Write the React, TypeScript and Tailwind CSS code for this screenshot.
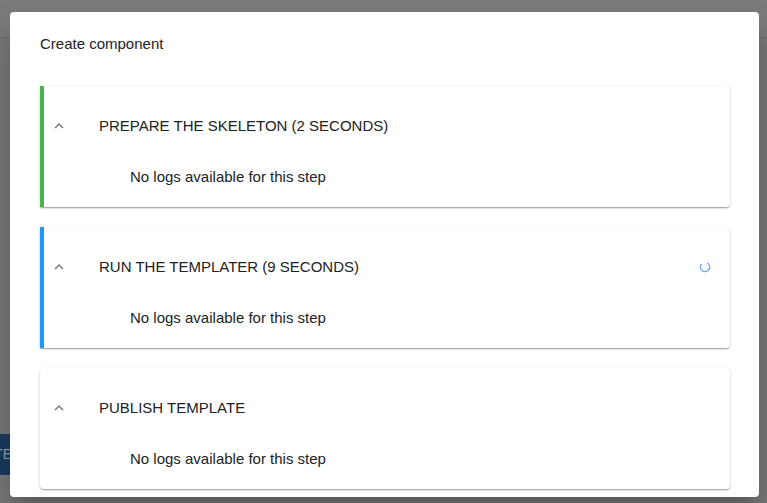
import React from "react";

const Chevron = () => (
  <svg width="18" height="18" viewBox="0 0 24 24" fill="#757575">
    <path d="M7.41 15.41L12 10.83l4.59 4.58L18 14l-6-6-6 6z" />
  </svg>
);

const Spinner = () => (
  <svg width="12" height="12" viewBox="0 0 12 12">
    <circle cx="6" cy="6" r="4.6" fill="none" stroke="#64a6ec" strokeWidth="1.4" strokeDasharray="22 7" transform="rotate(-60 6 6)" />
  </svg>
);

const Step = ({ title, border, loading }: { title: string; border: string; loading?: boolean }) => (
  <div
    className={`bg-white rounded-[4px] border-l-4 ${border} shadow-[0_1px_3px_rgba(0,0,0,0.2),0_1px_1px_rgba(0,0,0,0.14),0_2px_1px_-1px_rgba(0,0,0,0.12)]`}
  >
    <div className="flex items-center h-[80px] pl-[6px] pr-[19px]">
      <Chevron />
      <div className="ml-[31px] flex-1 text-[15px] leading-[20px] text-[#222]">{title}</div>
      {loading && <Spinner />}
    </div>
    <div className="pl-[86px] pt-[1px] pb-[20px] text-[15px] leading-[20px] text-[#222]">No logs available for this step</div>
  </div>
);

export default function App() {
  return (
    <div className="relative h-[503px] w-full overflow-hidden bg-[#777777] font-['Liberation_Sans',Arial,sans-serif]">
      <div className="h-[38px] border-b border-[#6b6b6b] bg-[#7a7a7a]" />
      <div className="mt-[396px] flex h-[41px] w-[12px] items-center justify-end overflow-hidden bg-[#1b3a5e] text-[14px] text-[#8c9db2]">
        <span className="whitespace-nowrap">TE</span>
      </div>
      <div className="absolute left-[10px] top-[12px] h-[485px] w-[749px] rounded-[4px] bg-white pl-[30px] pr-[29px] pt-[22px] shadow-[0_11px_15px_-7px_rgba(0,0,0,0.2),0_24px_38px_3px_rgba(0,0,0,0.14)]">
        <div className="text-[15px] leading-[20px] text-[#222]">Create component</div>
        <div className="mt-[32px] flex flex-col gap-[20px]">
          <Step title="PREPARE THE SKELETON (2 SECONDS)" border="border-l-[#4caf50] rounded-l-none" />
          <Step title="RUN THE TEMPLATER (9 SECONDS)" border="border-l-[#2196f3] rounded-l-none" loading />
          <Step title="PUBLISH TEMPLATE" border="border-l-transparent" />
        </div>
      </div>
    </div>
  );
}
